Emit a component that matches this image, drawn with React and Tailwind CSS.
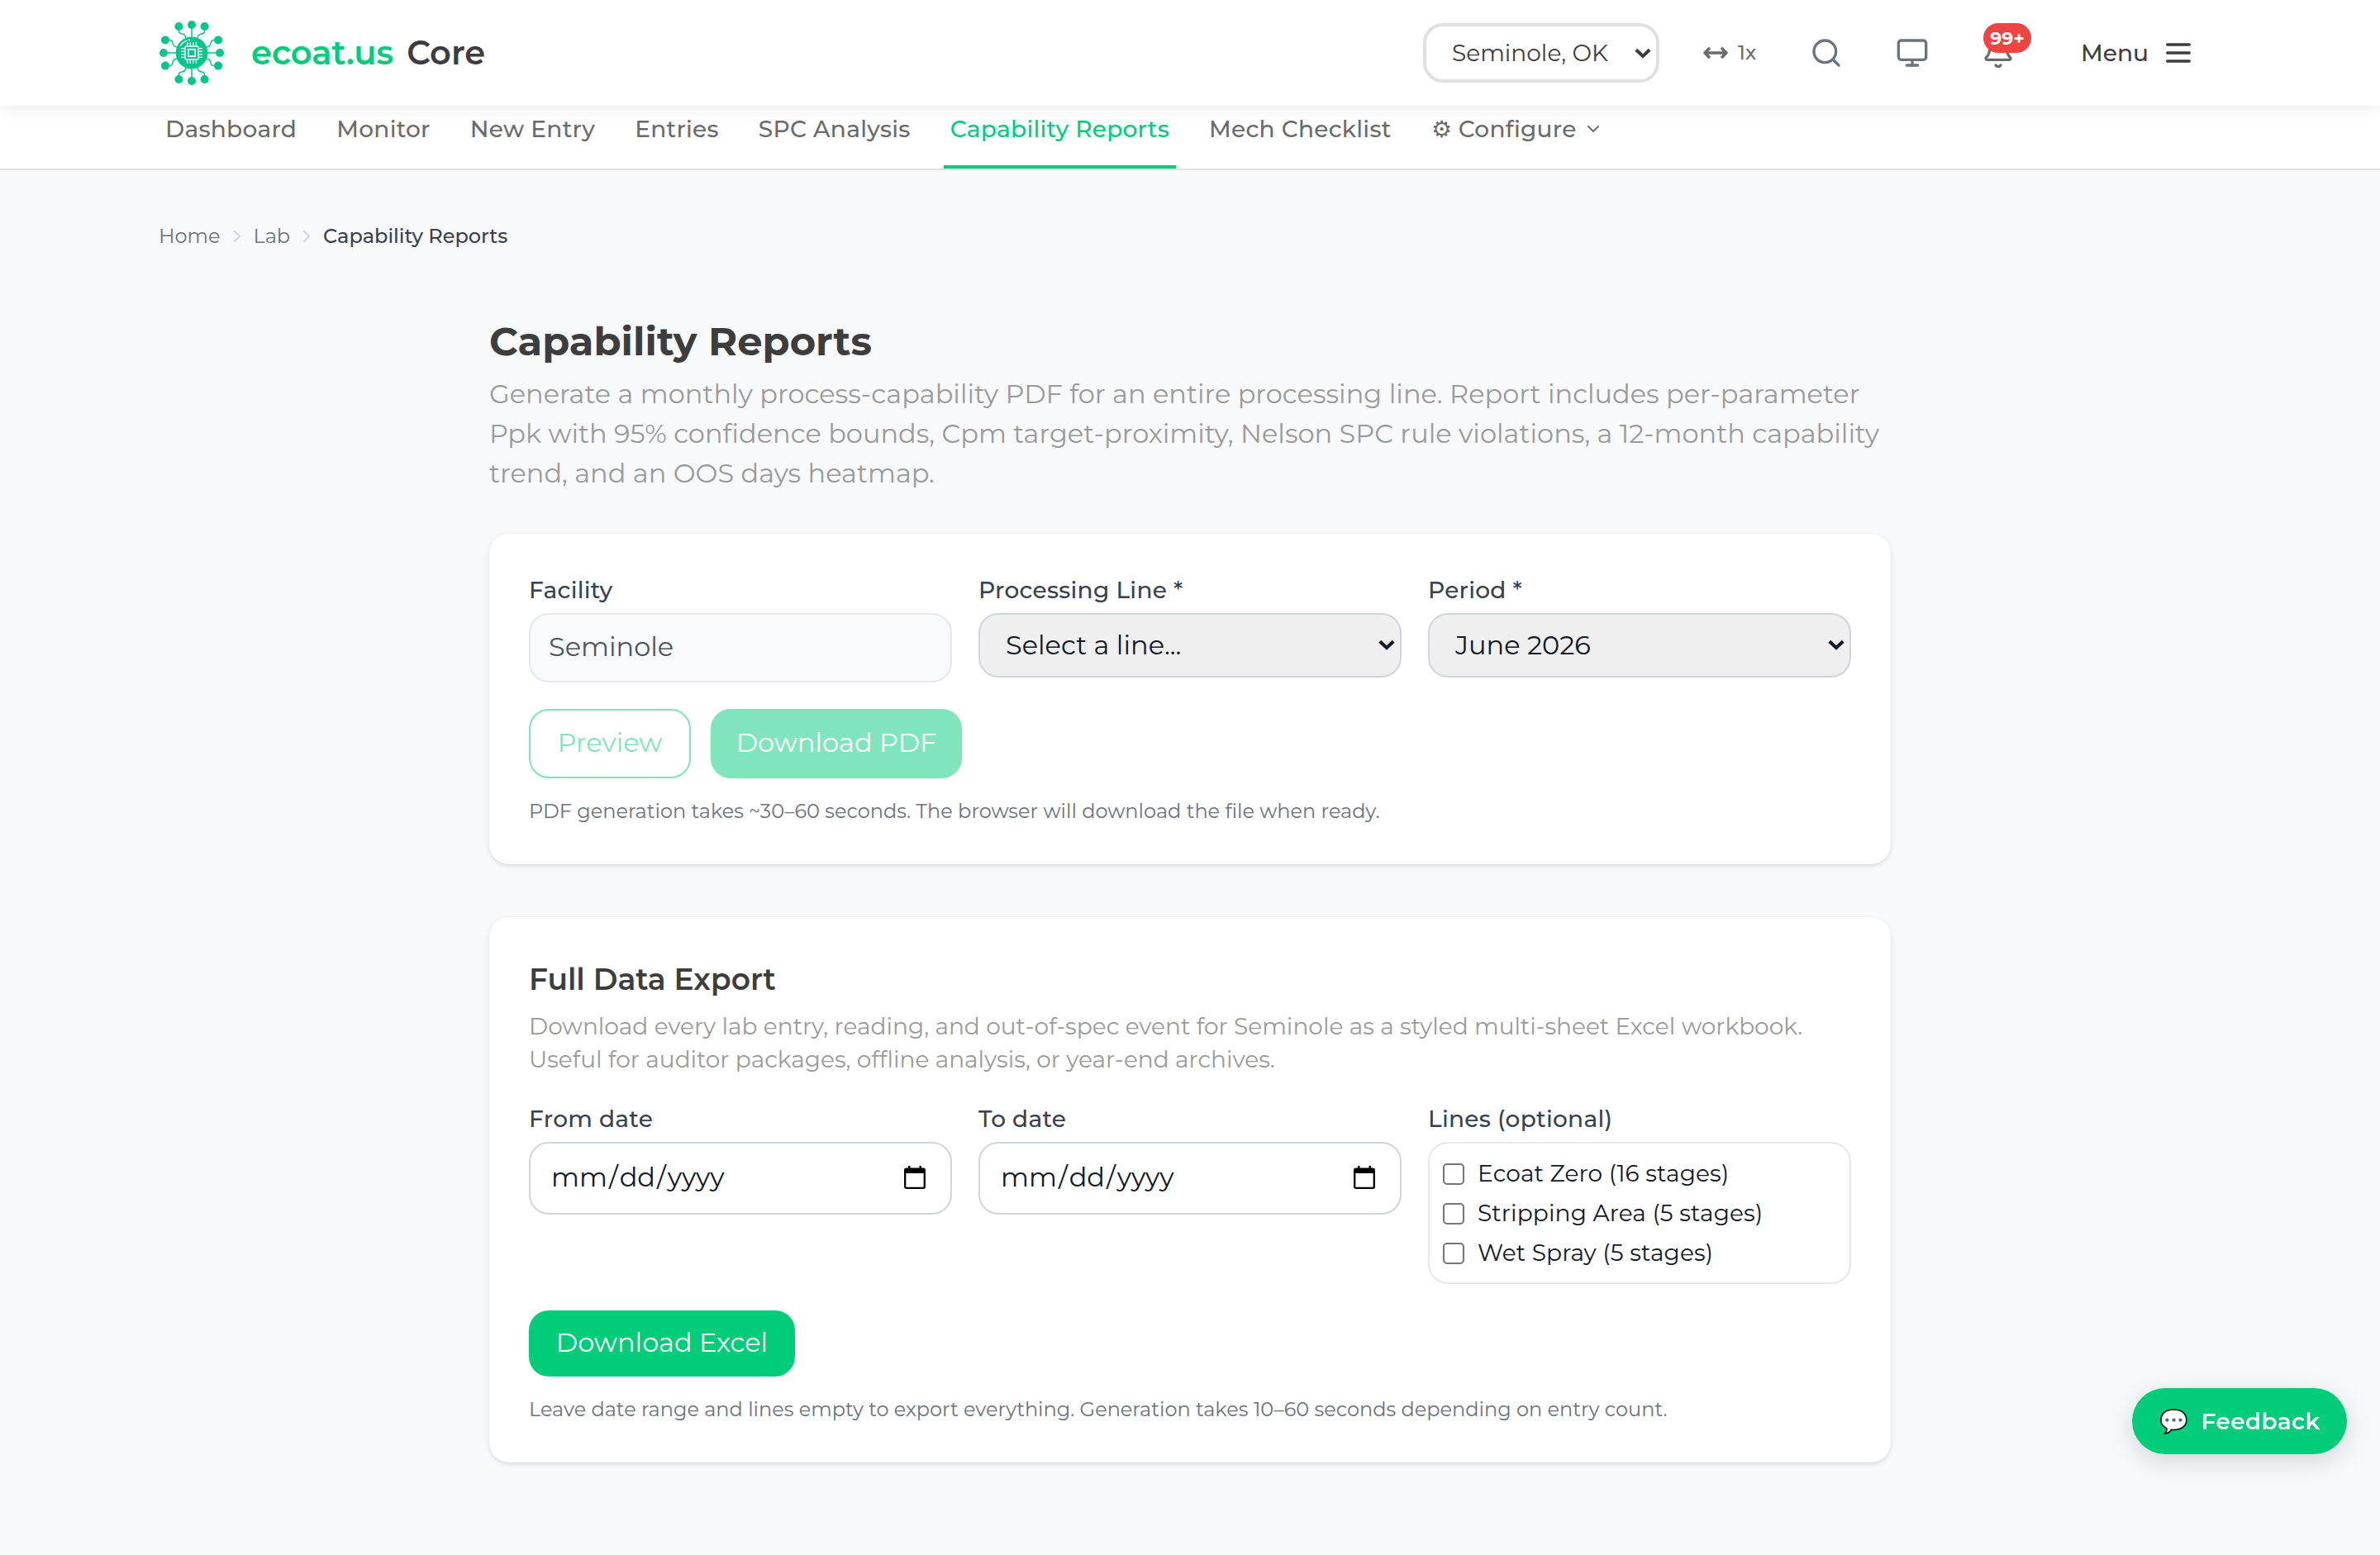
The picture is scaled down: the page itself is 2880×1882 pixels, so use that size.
import React from "react";
import { Bell, ChevronDown, ChevronRight, Monitor, Search } from "lucide-react";

const navItems = [
  { id: "dashboard", label: "Dashboard" },
  { id: "monitor", label: "Monitor" },
  { id: "new-entry", label: "New Entry" },
  { id: "entries", label: "Entries" },
  { id: "spc", label: "SPC Analysis" },
  { id: "capability", label: "Capability Reports", active: true },
  { id: "mech", label: "Mech Checklist" },
];

const lines = [
  "Ecoat Zero (16 stages)",
  "Stripping Area (5 stages)",
  "Wet Spray (5 stages)",
];

const spokes = [0, 90, 180, 270];
const pins = [-5.4, -1.8, 1.8, 5.4];

function Logo() {
  return (
    <svg viewBox="-40 -40 80 80" className="w-20 h-20" fill="none">
      {spokes.map((angle) => (
        <g key={angle} transform={`rotate(${angle})`}>
          <g stroke="#04c58b" strokeWidth="1.5">
            <path d="M0 -30V-18" />
            <path d="M-15.6 -28v1.5q0 3 3.6 3.4q5 .6 5 6.1" />
            <path d="M15.6 -28v1.5q0 3 -3.6 3.4q-5 .6 -5 6.1" />
          </g>
          <g fill="#04c58b">
            <circle cx="0" cy="-34" r="5" />
            <circle cx="-15.6" cy="-32" r="5" />
            <circle cx="15.6" cy="-32" r="5" />
          </g>
        </g>
      ))}
      <circle r="19.4" fill="#04c58b" />
      <g stroke="#fff" strokeWidth="1.4">
        {spokes.map((angle) => (
          <g key={angle} transform={`rotate(${angle})`}>
            {pins.map((x) => (
              <path key={x} d={`M${x} -12.8V-8`} />
            ))}
          </g>
        ))}
        <rect x="-8" y="-8" width="16" height="16" rx="2" fill="#04c58b" />
        <rect x="-4.2" y="-4.2" width="8.4" height="8.4" strokeWidth="1.8" />
        <path d="M-13.6 -9Q-11 -13 -6 -14.8M-4 -15.4l1.4 -.3" strokeLinecap="round" />
      </g>
    </svg>
  );
}

function SelectArrow({ className }) {
  return (
    <svg
      viewBox="0 0 20 13"
      className={`absolute w-5 h-[13px] pointer-events-none ${className}`}
      fill="none"
      stroke="currentColor"
      strokeWidth="4"
    >
      <path d="M1.8 2.2L10 10L18.2 2.2" />
    </svg>
  );
}

function Header() {
  return (
    <header className="relative z-10 h-32 px-48 bg-white flex items-center justify-between shadow-[0_4px_16px_rgba(0,0,0,0.08)]">
      <div className="flex items-center">
        <Logo />
        <div className="ml-8 flex gap-4 text-[40px] font-semibold leading-[48px]">
          <span className="text-[#00cc79]">ecoat.us</span>
          <span className="text-[#3d3d3d]">Core</span>
        </div>
      </div>

      <div className="flex items-center mr-8">
        <div className="relative w-[286px] text-[#3d3d3d]">
          <select className="appearance-none w-full h-[72px] pl-[31px] border-4 border-[#e0e0e0] rounded-3xl bg-white text-[28px]">
            <option>Seminole, OK</option>
          </select>
          <SelectArrow className="right-[10px] top-[30px]" />
        </div>

        <div className="ml-[52px] w-[130px] flex items-center gap-[11px] text-[#6b6b6b]">
          <svg viewBox="0 0 32 32" className="w-8 h-8" fill="none" stroke="currentColor" strokeWidth="3.6" strokeLinecap="round" strokeLinejoin="round">
            <path d="M3 16H29M8 11L3 16L8 21M24 11L29 16L24 21" />
          </svg>
          <span className="text-2xl leading-8 font-medium">1x</span>
        </div>

        <Search className="w-10 h-10 text-[#6b7280]" />
        <Monitor className="ml-16 w-10 h-10 text-[#6b7280]" />

        <div className="relative ml-16">
          <Bell className="w-10 h-10 text-[#6b6b6b]" />
          <span className="absolute left-0.5 -top-4 w-[58px] h-9 rounded-[18px] bg-[#ef4444] text-white text-[22px] font-bold flex items-center justify-center">
            99+
          </span>
        </div>

        <button className="ml-20 w-[138px] flex items-center justify-between text-[#3d3d3d] text-[28px] font-medium leading-10">
          Menu
          <svg viewBox="0 0 24 24" className="w-10 h-10" fill="none" stroke="currentColor" strokeWidth="2" strokeLinecap="round">
            <path d="M4 6h16M4 12h16M4 18h16" />
          </svg>
        </button>
      </div>
    </header>
  );
}

function SubNav() {
  return (
    <nav className="h-[78px] px-48 flex gap-8 bg-white border-b-2 border-[#e0e0e0] text-[28px] font-medium tracking-[0.01em] leading-10 text-[#6b6b6b]">
      {navItems.map((item) => (
        <a
          key={item.id}
          className={`h-[76px] px-2 pb-4 flex items-center border-b-4 ${
            item.active ? "border-[#00cc79] text-[#00cc79]" : "border-transparent"
          }`}
        >
          {item.label}
        </a>
      ))}
      <a className="h-[76px] px-2 pb-4 flex items-center border-b-4 border-transparent">
        ⚙ Configure
        <ChevronDown className="ml-2 w-6 h-6" />
      </a>
    </nav>
  );
}

function Breadcrumb() {
  return (
    <div className="flex items-center text-2xl leading-8 text-[#6b7280]">
      <span>Home</span>
      <ChevronRight className="mx-2 w-6 h-6 text-[#d1d5db]" />
      <span>Lab</span>
      <ChevronRight className="mx-2 w-6 h-6 text-[#d1d5db]" />
      <span className="font-medium text-[#374151]">Capability Reports</span>
    </div>
  );
}

function Field({ label, children }) {
  return (
    <div className="text-[#111827]">
      <div className="mb-2 text-[28px] leading-10 font-medium tracking-[0.01em] text-[#374151]">
        {label}
      </div>
      {children}
    </div>
  );
}

function SelectField({ label, value }) {
  return (
    <Field label={label}>
      <div className="relative">
        <select className="appearance-none w-full h-[78px] pl-[31px] border-2 border-[#d1d5db] rounded-3xl bg-[#efefef] text-[32px]">
          <option>{value}</option>
        </select>
        <SelectArrow className="right-2 top-8" />
      </div>
    </Field>
  );
}

function DateField({ label }) {
  return (
    <Field label={label}>
      <div className="h-[88px] pl-[23px] pr-[30px] pb-0.5 flex items-center border-2 border-[#d1d5db] rounded-3xl text-[32px] leading-[48px]">
        <span className="px-0.5">mm</span>/<span className="px-0.5">dd</span>/
        <span className="px-0.5">yyyy</span>
        <svg viewBox="0 0 26 28" className="ml-auto w-[26px] h-7" fill="none">
          <path d="M5 0h2.5v3H5zM18.500 0h2.5v3h-2.500z" fill="#000" />
          <rect x="1.2" y="3.700" width="23.600" height="23.100" rx="1.500" stroke="#000" strokeWidth="2.300" />
          <path d="M1 3.500h24v5.500H1z" fill="#000" />
        </svg>
      </div>
    </Field>
  );
}

function Card({ children }) {
  return (
    <section className="p-12 bg-white rounded-3xl shadow-[0_2px_6px_rgba(0,0,0,0.1),0_2px_4px_-2px_rgba(0,0,0,0.1)]">
      {children}
    </section>
  );
}

export default function App() {
  return (
    <div className="min-h-screen bg-[#f8f9fb] font-['Montserrat','Inter',sans-serif]">
      <Header />
      <SubNav />

      <main className="px-48 pt-16">
        <Breadcrumb />

        <div className="mx-auto mt-[83px] w-[1696px]">
          <h1 className="text-5xl leading-[56px] font-bold text-[#3d3d3d]">Capability Reports</h1>
          <p className="mt-3 text-[32px] leading-[48px] text-[#9a9a9a]">
            Generate a monthly process-capability PDF for an entire processing line. Report includes
            per-parameter Ppk with 95% confidence bounds, Cpm target-proximity, Nelson SPC rule
            violations, a 12-month capability trend, and an OOS days heatmap.
          </p>

          <div className="mt-[49px] flex flex-col gap-16">
            {/* Monthly PDF report */}
            <Card>
              <div className="grid grid-cols-3 gap-8">
                <Field label="Facility">
                  <div className="h-[84px] pl-[22px] pb-0.5 flex items-center border-2 border-[#e5e7eb] rounded-3xl bg-[#f9fafb] text-[32px] leading-[48px] text-[#4b5563]">
                    Seminole
                  </div>
                </Field>
                <SelectField label="Processing Line *" value="Select a line..." />
                <SelectField label="Period *" value="June 2026" />
              </div>
              <div className="mt-8 flex gap-6 text-[32px] leading-[48px]">
                <button className="w-[196px] h-[84px] pb-0.5 flex items-center justify-center border-2 border-[#00cc79] rounded-3xl text-[#00cc79] opacity-50">
                  Preview
                </button>
                <button className="w-[304px] h-[84px] pb-0.5 flex items-center justify-center rounded-3xl bg-[#80e5bc] text-white">
                  Download PDF
                </button>
              </div>
              <p className="mt-6 text-2xl leading-8 text-[#6b7280]">
                PDF generation takes ~30–60 seconds. The browser will download the file when ready.
              </p>
            </Card>

            {/* Excel export */}
            <Card>
              <h2 className="text-4xl leading-[54px] font-semibold text-[#3d3d3d]">Full Data Export</h2>
              <p className="mt-2.5 text-[28px] leading-10 text-[#9a9a9a]">
                Download every lab entry, reading, and out-of-spec event for Seminole as a styled
                multi-sheet Excel workbook. Useful for auditor packages, offline analysis, or
                year-end archives.
              </p>
              <div className="mt-8 grid grid-cols-3 gap-8">
                <DateField label="From date" />
                <DateField label="To date" />
                <Field label="Lines (optional)">
                  <div className="p-4 flex flex-col gap-2 border-2 border-[#e5e7eb] rounded-3xl">
                    {lines.map((line) => (
                      <label key={line} className="flex items-center gap-4 text-[28px] leading-10 tracking-[0.005em]">
                        <input
                          type="checkbox"
                          className="appearance-none mt-0.5 w-[26px] h-[26px] border-2 border-[#767676] rounded-[5px] bg-white"
                        />
                        {line}
                      </label>
                    ))}
                  </div>
                </Field>
              </div>
              <button className="mt-8 w-[322px] h-20 pb-0.5 flex items-center justify-center rounded-3xl bg-[#00cc79] text-white text-[32px] leading-[48px]">
                Download Excel
              </button>
              <p className="mt-6 text-2xl leading-8 text-[#6b7280]">
                Leave date range and lines empty to export everything. Generation takes 10–60 seconds
                depending on entry count.
              </p>
            </Card>
          </div>
        </div>
      </main>

      <button className="fixed right-10 bottom-[122px] w-[260px] h-20 flex items-center justify-center gap-4 rounded-full bg-[#00cc79] text-white text-[28px] font-semibold tracking-[0.01em] leading-10 shadow-[0_8px_32px_rgba(0,0,0,0.15)]">
        <span>💬</span>
        Feedback
      </button>
    </div>
  );
}
